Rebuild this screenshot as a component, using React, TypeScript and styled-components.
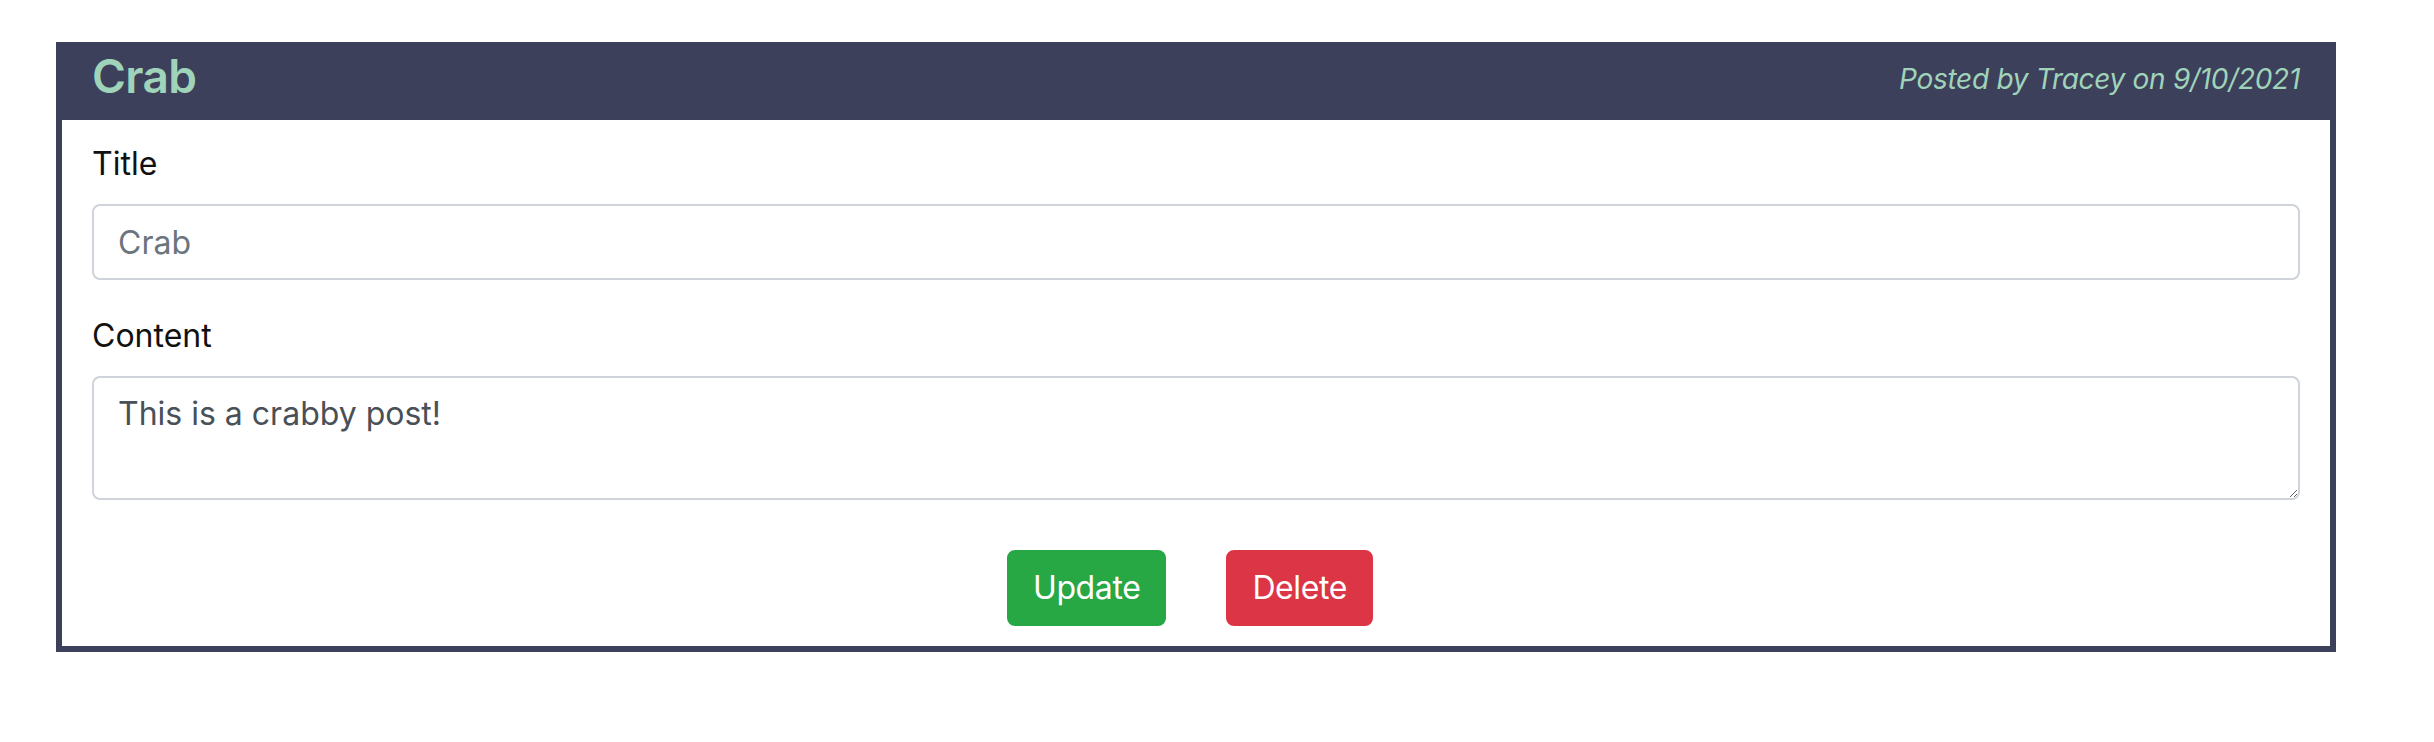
import React from "react";
import styled, { createGlobalStyle } from "styled-components";

const GlobalStyle = createGlobalStyle`
  html, body {
    margin: 0;
    padding: 0;
    background: #ffffff;
  }
  body {
    font-family: Inter, "Noto Sans", "Liberation Sans", sans-serif;
    color: #111111;
  }
  *, *::before, *::after {
    box-sizing: border-box;
  }
`;

const Page = styled.div`
  padding: 42px 0 0 56px;
`;

const Card = styled.section`
  width: 2280px;
  border: 6px solid #3d405b;
  background: #ffffff;
`;

const Header = styled.header`
  display: flex;
  justify-content: space-between;
  align-items: flex-start;
  height: 72px;
  padding: 0 30px;
  background: #3d405b;
`;

const PostTitle = styled.h2`
  margin: 0;
  font-size: 46px;
  line-height: 56px;
  font-weight: 600;
  letter-spacing: -0.6px;
  color: #9fd4ba;
`;

const Meta = styled.span`
  margin-top: 10px;
  font-size: 28px;
  line-height: 42px;
  font-style: italic;
  letter-spacing: -0.3px;
  color: #9fd4ba;
`;

const Body = styled.form`
  padding: 20px 30px 20px;
`;

const Group = styled.div`
  margin-bottom: 32px;
`;

const Label = styled.label`
  display: block;
  margin-bottom: 16px;
  font-size: 32px;
  line-height: 48px;
  color: #111111;
`;

const fieldBase = `
  display: block;
  width: 100%;
  padding: 12px 24px;
  font-family: Inter, "Noto Sans", "Liberation Sans", sans-serif;
  font-size: 32px;
  line-height: 48px;
  color: #495057;
  background: #ffffff;
  border: 2px solid #ced4da;
  border-radius: 8px;
  outline: none;
`;

const TextInput = styled.input`
  ${fieldBase}
  height: 76px;
  &::placeholder {
    color: #6c757d;
    opacity: 1;
  }
`;

const TextArea = styled.textarea`
  ${fieldBase}
  height: 124px;
  resize: vertical;
`;

const ButtonRow = styled.div`
  display: flex;
  justify-content: center;
  gap: 60px;
  padding-top: 18px;
  padding-right: 12px;
`;

const Button = styled.button<{ $tone: "success" | "danger" }>`
  height: 76px;
  padding: 12px 24px;
  font-family: Inter, "Noto Sans", "Liberation Sans", sans-serif;
  font-size: 32px;
  line-height: 48px;
  letter-spacing: -0.4px;
  color: #ffffff;
  border: 2px solid ${(p) => (p.$tone === "success" ? "#28a745" : "#dc3545")};
  background: ${(p) => (p.$tone === "success" ? "#28a745" : "#dc3545")};
  border-radius: 8px;
  cursor: pointer;
`;

export default function App() {
  return (
    <>
      <GlobalStyle />
      <Page>
        <Card>
          <Header>
            <PostTitle>Crab</PostTitle>
            <Meta>Posted by Tracey on 9/10/2021</Meta>
          </Header>
          <Body onSubmit={(e) => e.preventDefault()}>
            <Group>
              <Label htmlFor="title">Title</Label>
              <TextInput id="title" type="text" placeholder="Crab" />
            </Group>
            <Group>
              <Label htmlFor="content">Content</Label>
              <TextArea id="content" rows={2} defaultValue="This is a crabby post!" />
            </Group>
            <ButtonRow>
              <Button type="button" $tone="success">Update</Button>
              <Button type="button" $tone="danger">Delete</Button>
            </ButtonRow>
          </Body>
        </Card>
      </Page>
    </>
  );
}
